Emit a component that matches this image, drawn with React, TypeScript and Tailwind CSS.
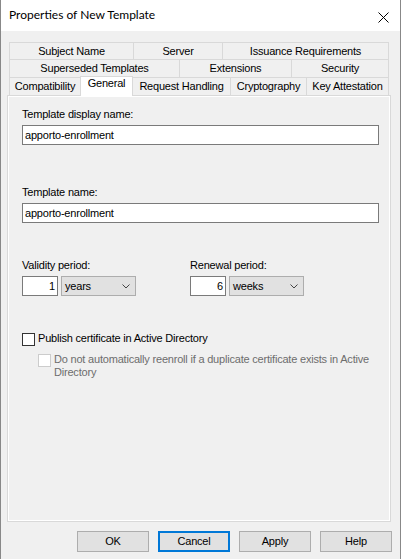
import React from "react";

const Chevron = () => (
  <svg width="8" height="5" viewBox="0 0 8 5" className="block">
    <polyline points="0.5,0.5 4,4 7.5,0.5" fill="none" stroke="#444" strokeWidth="1" />
  </svg>
);

function Spin({ value }: { value: string }) {
  return (
    <div className="w-[36px] h-[20px] border border-[#7a7a7a] bg-white flex items-center justify-end pr-[2px] leading-[13px]">
      {value}
    </div>
  );
}

function Combo({ value }: { value: string }) {
  return (
    <div className="w-[75px] h-[20px] border border-[#adadad] bg-[#e1e1e1] flex items-center justify-between pl-[3px] pr-[5px] leading-[13px]">
      <span>{value}</span>
      <Chevron />
    </div>
  );
}

function Btn({ label, def }: { label: string; def?: boolean }) {
  return (
    <div
      className={
        def
          ? "w-[72px] h-[21px] border-2 border-[#0078d7] bg-[#e1e1e1] flex items-center justify-center leading-[13px]"
          : "w-[72px] h-[21px] border border-[#adadad] bg-[#e1e1e1] flex items-center justify-center leading-[13px]"
      }
    >
      {label}
    </div>
  );
}

export default function App() {
  return (
    <div className="w-[401px] h-[559px] bg-[#f0f0f0] border-x border-[#888888] flex flex-col font-['Liberation_Sans',Arial,sans-serif] text-[11px] tracking-[-0.2px] text-black">
      {/* Title bar */}
      <div className="h-[31px] bg-white flex items-start justify-between pl-[8px] pr-[11px] shrink-0">
        <span className="mt-[7px] text-[12px] leading-[16px] tracking-normal font-['Lato','Liberation_Sans',sans-serif]">
          Properties of New Template
        </span>
        <svg width="11" height="11" viewBox="0 0 11 11" className="mt-[12px]">
          <line x1="0.5" y1="0.5" x2="10.5" y2="10.5" stroke="#000" strokeWidth="1" />
          <line x1="10.5" y1="0.5" x2="0.5" y2="10.5" stroke="#000" strokeWidth="1" />
        </svg>
      </div>

      {/* Tabs */}
      <div className="mt-[11px] ml-[8px] w-[380px] flex flex-col leading-[13px]">
        <div className="flex h-[17px]">
          <div className="w-[124px] border-l border-t border-[#d9d9d9] flex items-center justify-center">Subject Name</div>
          <div className="w-[89px] border-l border-t border-[#d9d9d9] flex items-center justify-center">Server</div>
          <div className="w-[167px] border-l border-t border-r border-[#d9d9d9] flex items-center justify-center">Issuance Requirements</div>
        </div>
        <div className="flex h-[18px]">
          <div className="w-[170px] border-l border-t border-[#d9d9d9] flex items-center justify-center">Superseded Templates</div>
          <div className="w-[112px] border-l border-t border-[#d9d9d9] flex items-center justify-center">Extensions</div>
          <div className="w-[98px] border-l border-t border-r border-[#d9d9d9] flex items-center justify-center">Security</div>
        </div>
        <div className="flex h-[18px] items-start">
          <div className="w-[71px] h-[18px] border-l border-t border-[#d9d9d9] flex items-center justify-center">Compatibility</div>
          <div className="relative z-10 w-[53px] h-[20px] -mt-[1px] bg-white border-l border-t border-r border-[#d9d9d9] flex justify-center">General</div>
          <div className="w-[97px] h-[18px] border-t border-[#d9d9d9] flex items-center justify-center">Request Handling</div>
          <div className="w-[76px] h-[18px] border-l border-t border-[#d9d9d9] flex items-center justify-center">Cryptography</div>
          <div className="w-[83px] h-[18px] border-l border-t border-r border-[#d9d9d9] flex items-center justify-center">Key Attestation</div>
        </div>
      </div>

      {/* Panel */}
      <div className="ml-[6px] w-[384px] h-[427px] border border-[#d9d9d9] shrink-0">
        <div className="h-full border border-white pl-[13px] pt-[11px] flex flex-col leading-[13px]">
          <div>Template display name:</div>
          <div className="mt-[4px] w-[357px] h-[20px] border border-[#7a7a7a] bg-white flex items-center pl-[2px]">
            apporto-enrollment
          </div>

          <div className="mt-[41px]">Template name:</div>
          <div className="mt-[4px] w-[357px] h-[20px] border border-[#7a7a7a] bg-white flex items-center pl-[2px]">
            apporto-enrollment
          </div>

          <div className="mt-[36px] flex">
            <div className="w-[168px] flex flex-col">
              <div>Validity period:</div>
              <div className="mt-[4px] flex gap-[3px]">
                <Spin value="1" />
                <Combo value="years" />
              </div>
            </div>
            <div className="flex flex-col">
              <div>Renewal period:</div>
              <div className="mt-[4px] flex gap-[3px]">
                <Spin value="6" />
                <Combo value="weeks" />
              </div>
            </div>
          </div>

          <div className="mt-[36px] flex items-start">
            <div className="mt-[1px] w-[13px] h-[13px] border border-[#333333] bg-white shrink-0" />
            <span className="ml-[3px]">Publish certificate in Active Directory</span>
          </div>

          <div className="mt-[7px] ml-[16px] flex items-start text-[#6d6d6d]">
            <div className="mt-[1px] w-[13px] h-[13px] border border-[#cccccc] bg-white shrink-0" />
            <span className="ml-[3px] w-[330px]">
              Do not automatically reenroll if a duplicate certificate exists in Active Directory
            </span>
          </div>
        </div>
      </div>

      {/* Buttons */}
      <div className="mt-[9px] flex justify-end gap-[9px] pr-[8px]">
        <Btn label="OK" />
        <Btn label="Cancel" def />
        <Btn label="Apply" />
        <Btn label="Help" />
      </div>
    </div>
  );
}
